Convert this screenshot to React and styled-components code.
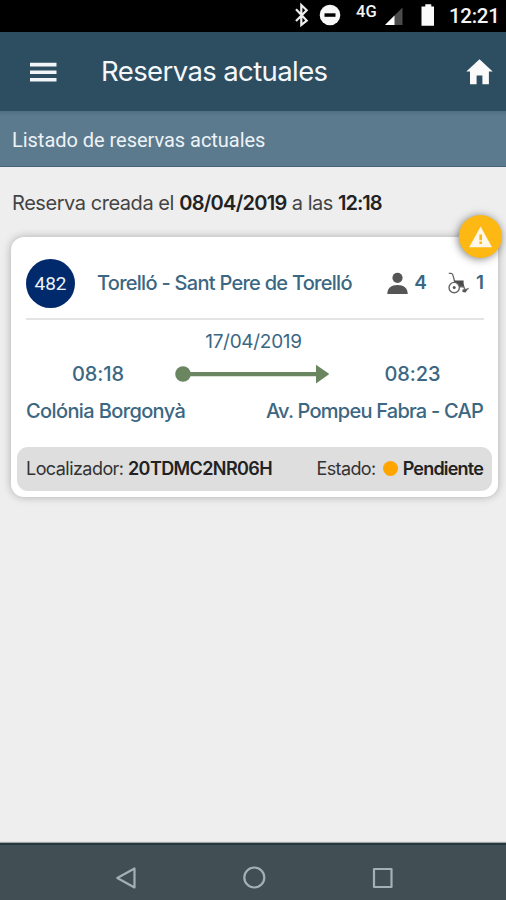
import React from "react";
import styled, { createGlobalStyle } from "styled-components";

const GlobalStyle = createGlobalStyle`
    * {
        box-sizing: border-box;
    }

    body {
        margin: 0;
        background-color: #eeeeee;
        font-family: "Inter", "Liberation Sans", sans-serif;
    }
`

const Screen = styled.div`
    display: flex;
    flex-direction: column;
    width: 506px;
    height: 900px;
    background-color: #eeeeee;
    overflow: hidden;
    white-space: nowrap;
`

const Text = styled.span`
    font-size: ${props => props.$size || 20}px;
    font-weight: ${props => props.$weight || 400};
    letter-spacing: ${props => props.$spacing || 0}px;
    color: ${props => props.$color || "inherit"};
`

const StatusBar = styled.div`
    display: flex;
    align-items: center;
    justify-content: flex-end;
    height: 32px;
    padding-right: 8px;
    background-color: #000;
    color: #f4f4f4;
    font-family: "Roboto", sans-serif;
`

const StatusIcons = styled.svg`
    display: block;
    width: 62px;
    height: 32px;
    flex: none;
`

const Network = styled.span`
    width: 24px;
    margin: 0 0 9px 9px;
    font-size: 16.5px;
    font-weight: 500;
    line-height: 18px;
`

const SignalIcons = styled.svg`
    display: block;
    width: 54px;
    height: 32px;
    margin-right: 15px;
    flex: none;
`

const Clock = styled.span`
    width: 49px;
    font-size: 20.5px;
    font-weight: 500;
    letter-spacing: -0.3px;
`

const Header = styled.header`
    display: flex;
    align-items: center;
    height: 79px;
    padding: 0 13px 0 30px;
    background-color: #2d4d61;
    color: #f5f8fa;
`

const Title = styled.h1`
    flex: 1;
    margin: 0 0 2px 44px;
    font-size: 27.5px;
    font-weight: 400;
    line-height: 40px;
    letter-spacing: -0.6px;
`

const SubHeader = styled.div`
    height: 56px;
    padding-left: 12px;
    border-bottom: 1px solid #41647a;
    background: linear-gradient(#506f83 0, #5c7a8d 5px);
    color: #edf3f7;
    font-family: "Roboto", sans-serif;
    font-size: 20px;
    line-height: 58px;
    letter-spacing: -0.03px;
`

const Content = styled.main`
    flex: 1;
    padding: 20px 8px 0 11px;
`

const Created = styled.div`
    height: 50px;
    padding-left: 1px;
    line-height: 32px;
    color: #444;
`

const Card = styled.section`
    position: relative;
    height: 260px;
    padding: 0 6px;
    border-radius: 13px;
    background-color: #fff;
    box-shadow: 0 0 9px rgba(0, 0, 0, 0.28);
    color: #3c6782;
`

const Warning = styled.div`
    position: absolute;
    top: -22px;
    right: -4px;
    width: 43px;
    height: 43px;
    border-radius: 50%;
    background-color: #fdb813;
    box-shadow: -1px 1px 8px rgba(0, 0, 0, 0.5);
`

const LineRow = styled.div`
    display: flex;
    align-items: center;
    height: 83px;
    margin: 0 8px 0 9px;
    padding-top: 10px;
    border-bottom: 2px solid #e4e4e4;
`

const Badge = styled.div`
    width: 49px;
    height: 49px;
    margin-top: 2px;
    border-radius: 50%;
    background-color: #002a6c;
    color: #eef2fa;
    font-family: "Roboto", sans-serif;
    font-size: 19px;
    line-height: 50px;
    text-align: center;
`

const LineName = styled.div`
    width: 290px;
    padding-left: 22px;
`

const Passengers = styled.div`
    display: flex;
    align-items: center;
    justify-content: space-between;
    width: ${props => props.$width}px;
    margin-left: ${props => props.$gap || 0}px;
`

const DateRow = styled.div`
    padding: 1px 2px 0 0;
    height: 38px;
    line-height: 42px;
    text-align: center;
`

const Times = styled.div`
    display: grid;
    grid-template-columns: 158px 154px 1fr;
    align-items: center;
    height: 32px;
    text-align: center;
`

const Time = styled(Text)`
    padding-left: 4px;
`

const Stops = styled.div`
    display: flex;
    justify-content: space-between;
    height: 57px;
    padding: 0 9px;
    line-height: 43px;
`

const Footer = styled.div`
    display: flex;
    align-items: center;
    justify-content: space-between;
    height: 44px;
    padding: 0 9px 1px 9px;
    border-radius: 11px;
    background-color: #dedede;
    color: #333;
`

const State = styled.div`
    display: flex;
    align-items: center;
`

const Dot = styled.span`
    width: 15px;
    height: 15px;
    margin: 0 5px 0 7px;
    border-radius: 50%;
    background-color: #ffa500;
`

const NavBar = styled.nav`
    display: flex;
    align-items: center;
    justify-content: space-between;
    height: 57px;
    padding: 10px 112px 0 115px;
    border-top: 2px solid #26383e;
    background-color: #414e53;
    box-shadow: 0 -1px 1px rgba(0, 0, 0, 0.3);
`

const Icon = styled.svg`
    display: block;
    flex: none;
`

const MenuIcon = () => (
    <Icon width="27" height="20" viewBox="0 0 27 20" fill="#f3f6f8">
        <path d="M0 0.8h26.5v3.7H0zM0 8.4h26.5v3.7H0zM0 15.9h26.5v3.7H0z"/>
    </Icon>
)

const HomeIcon = () => (
    <Icon width="27" height="26" viewBox="0 0 27 26" fill="#fafafa">
        <path d="M13.5 0.3 26.7 12.5h-3.8v12.7h-6.5v-8.8h-5.8v8.8H4V12.5H0.3z"/>
    </Icon>
)

const PersonIcon = () => (
    <Icon width="21" height="22" viewBox="0 0 21 22" fill="#555">
        <circle cx="10.5" cy="5.8" r="5.1"/>
        <path d="M0.3 21.9c0-6 4-9 10.2-9s10.2 3 10.2 9z"/>
    </Icon>
)

const WheelchairIcon = () => (
    <Icon width="21" height="22" viewBox="0 0 21 22" fill="none" stroke="#666">
        <path d="M0.8 1.3h2.4c1.3 0 1.6 1 1.9 2.4l1.6 6" strokeWidth="1.3"/>
        <path d="M5.8 8.5h9.8v2.8l.8 4H9.5L6.3 11z" fill="#4b4b4b" stroke="none"/>
        <circle cx="6.2" cy="15.6" r="5.2" fill="#fff" strokeWidth="1.4"/>
        <circle cx="6.2" cy="15.6" r="1.5" fill="#555" stroke="none"/>
        <path d="M11.5 14.5h4l1.8 3.6 3.3-1.8" strokeWidth="1.4"/>
        <path d="M14.5 17.2l4.8.8-1.8 2.4-3-.5z" fill="#555" stroke="none"/>
    </Icon>
)

const WarningIcon = () => (
    <Icon width="43" height="43" viewBox="0 0 43 43">
        <path d="M21.6 11.5 33 32.2H10.2z" fill="#fff8e8"/>
        <path d="M20.4 19.5h2.6v5.8h-2.6zM20.4 26.6h2.6v2.5h-2.6z" fill="#fdb813"/>
    </Icon>
)

const RouteArrow = () => (
    <Icon width="154" height="20" viewBox="0 0 154 20" fill="#6a8660">
        <circle cx="8" cy="10" r="7.8"/>
        <path d="M8 8h133v4.2H8z"/>
        <path d="M141 0.8 154.5 10 141 19.5z"/>
    </Icon>
)

class App extends React.Component {
    render() {
        return(
            <Screen>
                <GlobalStyle/>
                <StatusBar>
                    <StatusIcons viewBox="0 0 62 32" fill="none">
                        <path d="M11 9.3 21.7 20.6 16.3 25V5l5.4 5.2L11 21" stroke="#eee" strokeWidth="2.2"/>
                        <circle cx="45" cy="15" r="10.3" fill="#f7f7f7"/>
                        <path d="M39.5 13.3h11v3.5h-11z" fill="#000"/>
                    </StatusIcons>
                    <Network>4G</Network>
                    <SignalIcons viewBox="0 0 54 32">
                        <path d="M5 25 22.5 7.5V25z" fill="#4b4b4b"/>
                        <path d="M5 25 14.5 15.5V25z" fill="#fff"/>
                        <path d="M41.5 6.5h3.8V4.3h6v2.2h3.4v19.2H41.5z" fill="#fafafa"/>
                    </SignalIcons>
                    <Clock>12:21</Clock>
                </StatusBar>
                <Header>
                    <MenuIcon/>
                    <Title>Reservas actuales</Title>
                    <HomeIcon/>
                </Header>
                <SubHeader>Listado de reservas actuales</SubHeader>
                <Content>
                    <Created>
                        <Text $spacing={-0.45}>Reserva creada el </Text>
                        <Text $weight={600} $spacing={-0.7} $color="#222">08/04/2019</Text>
                        <Text $spacing={-0.5}> a las </Text>
                        <Text $weight={600} $spacing={-1} $color="#222">12:18</Text>
                    </Created>
                    <Card>
                        <Warning><WarningIcon/></Warning>
                        <LineRow>
                            <Badge>482</Badge>
                            <LineName><Text $weight={500} $spacing={-0.72}>Torelló - Sant Pere de Torelló</Text></LineName>
                            <Passengers $width={40} $gap={22}>
                                <PersonIcon/>
                                <Text $size={19} $weight={600}>4</Text>
                            </Passengers>
                            <Passengers $width={36} $gap={21}>
                                <WheelchairIcon/>
                                <Text $size={19} $weight={600}>1</Text>
                            </Passengers>
                        </LineRow>
                        <DateRow><Text $size={19} $spacing={-0.3}>17/04/2019</Text></DateRow>
                        <Times>
                            <Time $weight={500} $spacing={-0.1}>08:18</Time>
                            <RouteArrow/>
                            <Time $weight={500} $spacing={-0.1}>08:23</Time>
                        </Times>
                        <Stops>
                            <Text $weight={500} $spacing={-0.62}>Colónia Borgonyà</Text>
                            <Text $weight={500} $spacing={-0.77}>Av. Pompeu Fabra - CAP</Text>
                        </Stops>
                        <Footer>
                            <div>
                                <Text $size={18} $spacing={-0.55}>Localizador: </Text>
                                <Text $size={18} $weight={600} $spacing={-0.6} $color="#222">20TDMC2NR06H</Text>
                            </div>
                            <State>
                                <Text $size={18} $spacing={-0.6}>Estado:</Text>
                                <Dot/>
                                <Text $size={18} $weight={600} $spacing={-0.8} $color="#222">Pendiente</Text>
                            </State>
                        </Footer>
                    </Card>
                </Content>
                <NavBar>
                    <Icon width="22" height="24" viewBox="0 0 22 24" fill="none" stroke="#a4b0b4" strokeWidth="2.2" strokeLinejoin="round">
                        <path d="M19.5 2.5v19L2.3 12z"/>
                    </Icon>
                    <Icon width="24" height="24" viewBox="0 0 24 24" fill="none" stroke="#a4b0b4" strokeWidth="2.2">
                        <circle cx="11.3" cy="11.5" r="10"/>
                    </Icon>
                    <Icon width="22" height="24" viewBox="0 0 22 24" fill="none" stroke="#a4b0b4" strokeWidth="2.2" strokeLinejoin="round">
                        <path d="M2 3h17.5v18H2z"/>
                    </Icon>
                </NavBar>
            </Screen>
        );
    }
}

export default App;
